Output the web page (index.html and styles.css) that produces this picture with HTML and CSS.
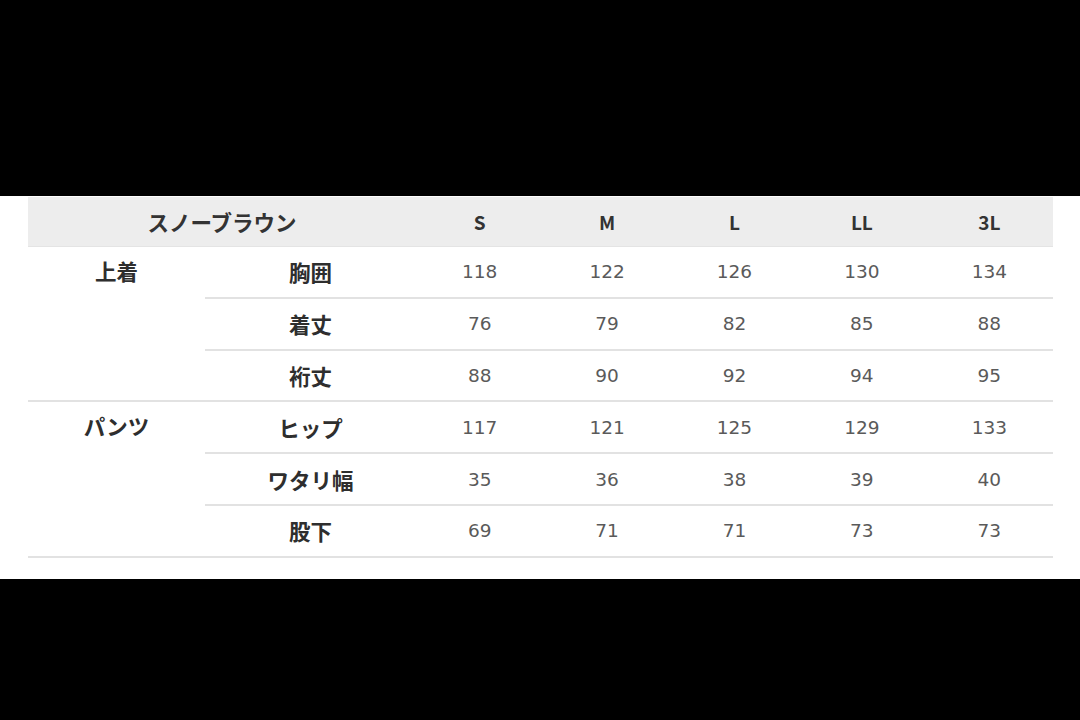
FILE: index.html
```html
<!DOCTYPE html>
<html lang="ja">
<head>
<meta charset="utf-8">
<link rel="stylesheet" href="styles.css">
</head>
<body>
<div class="band">
  <table class="size-table">
    <colgroup>
      <col class="c-group"><col class="c-item">
      <col class="c-size"><col class="c-size"><col class="c-size"><col class="c-size"><col class="c-size">
    </colgroup>
    <thead>
      <tr>
        <th colspan="2" class="title">スノーブラウン</th>
        <th>S</th><th>M</th><th>L</th><th>LL</th><th>3L</th>
      </tr>
    </thead>
    <tbody>
      <tr>
        <td rowspan="3" class="group">上着</td>
        <td class="item">胸囲</td>
        <td>118</td><td>122</td><td>126</td><td>130</td><td>134</td>
      </tr>
      <tr>
        <td class="item">着丈</td>
        <td>76</td><td>79</td><td>82</td><td>85</td><td>88</td>
      </tr>
      <tr>
        <td class="item">裄丈</td>
        <td>88</td><td>90</td><td>92</td><td>94</td><td>95</td>
      </tr>
      <tr>
        <td rowspan="3" class="group">パンツ</td>
        <td class="item">ヒップ</td>
        <td>117</td><td>121</td><td>125</td><td>129</td><td>133</td>
      </tr>
      <tr>
        <td class="item">ワタリ幅</td>
        <td>35</td><td>36</td><td>38</td><td>39</td><td>40</td>
      </tr>
      <tr>
        <td class="item">股下</td>
        <td>69</td><td>71</td><td>71</td><td>73</td><td>73</td>
      </tr>
    </tbody>
  </table>
</div>
</body>
</html>
```

FILE: styles.css
```css
html, body {
  margin: 0;
  padding: 0;
  background: #000;
  width: 1080px;
  height: 720px;
  overflow: hidden;
}

body {
  padding-top: 196px;
  box-sizing: border-box;
}

.band {
  background: #fff;
  height: 383px;
  padding: 1px 27px 0 28px;
  box-sizing: border-box;
}

.size-table {
  width: 1025px;
  border-collapse: collapse;
  table-layout: fixed;
  font-family: "Noto Sans CJK JP", "Noto Sans", sans-serif;
}

.c-group { width: 177px; }
.c-item { width: 211px; }
.c-size { width: 127.4px; }

.size-table th {
  background: #ededed;
  height: 49px;
  padding: 0;
  font-size: 19px;
  font-weight: 700;
  color: #333;
  text-align: center;
  vertical-align: middle;
  border-bottom: 1px solid #e4e4e4;
}

.size-table th.title {
  font-size: 21.5px;
}

.size-table td {
  height: 49.8px;
  padding: 0;
  text-align: center;
  vertical-align: middle;
  border-bottom: 2px solid #e2e2e2;
  font-family: "DejaVu Sans", "Noto Sans", sans-serif;
  font-size: 18.5px;
  color: #5a5a5a;
}

.size-table td.item,
.size-table td.group {
  font-family: "Noto Sans CJK JP", "Noto Sans", sans-serif;
  font-weight: 700;
  font-size: 21.5px;
  color: #2e2e2e;
}

.size-table td.group {
  vertical-align: top;
  line-height: 48px;
}
```
